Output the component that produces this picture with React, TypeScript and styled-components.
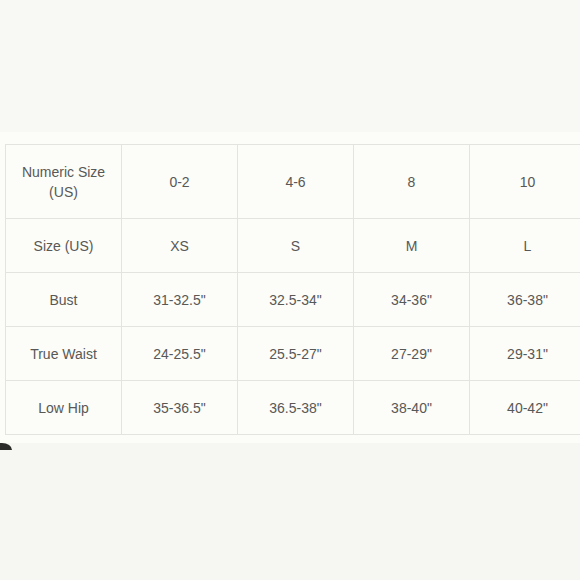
import styled, { createGlobalStyle } from "styled-components"

const Global = createGlobalStyle`
body{
  margin:0;
  background:#fbfbf7;
  font-family:"Liberation Sans", Arial, sans-serif;
}
`

const Page = styled.div`
width:580px;
height:580px;
overflow:hidden;
display:flex;
flex-direction:column;
background:#fbfbf7;
`
const TopBand = styled.div`
height:132px;
background:#f8f8f4;
`
const Middle = styled.div`
padding:12px 0 0 5px;
height:299px;
background:#fcfcf8;
`
const Grid = styled.div`
display:grid;
grid-template-columns:repeat(5, 116px);
grid-template-rows:74px repeat(4, 54px);
border-top:1px solid #e3e3df;
border-left:1px solid #e3e3df;
width:max-content;
`
const Cell = styled.div<{ $first?: boolean }>`
box-sizing:border-box;
border-right:1px solid #e3e3df;
border-bottom:1px solid #e3e3df;
display:flex;
align-items:center;
justify-content:center;
text-align:center;
color:#585856;
font-size:14px;
line-height:20px;
padding-top:${p => (p.$first ? "0" : "1px")};
`
const Bottom = styled.div`
flex:1;
background:#f6f6f2;
`
const Blob = styled.div`
width:12px;
height:7px;
background:#2c2c2a;
border-top-right-radius:10px 7px;
`

const rows: string[][] = [
  ["Numeric Size\n(US)", "0-2", "4-6", "8", "10"],
  ["Size (US)", "XS", "S", "M", "L"],
  ["Bust", "31-32.5\"", "32.5-34\"", "34-36\"", "36-38\""],
  ["True Waist", "24-25.5\"", "25.5-27\"", "27-29\"", "29-31\""],
  ["Low Hip", "35-36.5\"", "36.5-38\"", "38-40\"", "40-42\""],
]

const App = () => {
  return (
    <Page>
      <Global />
      <TopBand />
      <Middle>
        <Grid>
          {rows.map((r, i) =>
            r.map((c, j) => (
              <Cell key={i + "-" + j} $first={i === 0}>
                <span style={{ whiteSpace: "pre-line" }}>{c}</span>
              </Cell>
            ))
          )}
        </Grid>
      </Middle>
      <Bottom>
        <Blob />
      </Bottom>
    </Page>
  )
}

export default App
